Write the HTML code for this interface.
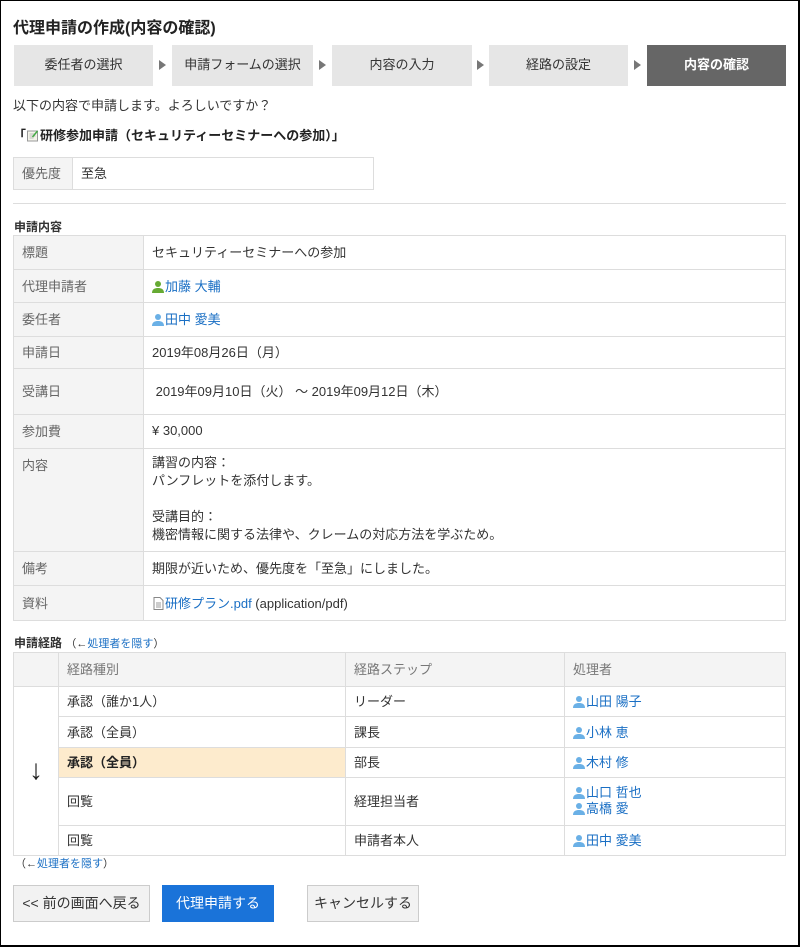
<!DOCTYPE html>
<html><head><meta charset="utf-8"><style>
*{box-sizing:border-box;margin:0;padding:0}
body{width:800px;height:947px;font-family:"Liberation Sans","Noto Sans CJK JP",sans-serif;font-size:13px;color:#333;background:#fff;position:relative;overflow:hidden}
.frame{position:absolute;left:0;top:0;width:800px;height:947px;border:1px solid #000;border-width:1px 2px 2px 1px}
.a{position:absolute}
.step{position:absolute;top:45px;height:41px;background:#e6e6e6;text-align:center;line-height:40px;font-size:13px;color:#333}
.arr{position:absolute;top:60px;width:0;height:0;border-left:7px solid #777;border-top:5px solid transparent;border-bottom:5px solid transparent}
table{border-collapse:collapse;position:absolute}
td{border:1px solid #ddd;padding:0 8px;vertical-align:middle;padding-bottom:2px}
td.l{background:#f4f4f4;color:#666}
a{color:#1a6fc4;text-decoration:none}
.u{display:inline-block;width:12px;height:13px;vertical-align:-2px;margin-right:1px}
.btn{position:absolute;top:885px;height:37px;line-height:35px;text-align:center;font-size:14px;border:1px solid #ccc;background:#f2f2f2;color:#333}
</style></head><body>
<div class="frame"></div>
<div class="a" style="left:13px;top:14px;font-size:16px;font-weight:bold;color:#222">代理申請の作成(内容の確認)</div>
<div class="step" style="left:14px;width:139px">委任者の選択</div>
<div class="arr" style="left:159px"></div>
<div class="step" style="left:172px;width:141px">申請フォームの選択</div>
<div class="arr" style="left:319px"></div>
<div class="step" style="left:332px;width:140px">内容の入力</div>
<div class="arr" style="left:477px"></div>
<div class="step" style="left:489px;width:139px">経路の設定</div>
<div class="arr" style="left:634px"></div>
<div class="step" style="left:647px;width:139px;background:#666;color:#fff;font-weight:bold">内容の確認</div>
<div class="a" style="left:13px;top:95px">以下の内容で申請します。よろしいですか？</div>
<div class="a" style="left:13px;top:125px;font-weight:bold;color:#222">「<svg class="u" viewBox="0 0 12 13" style="width:13px"><rect x="1" y="2" width="10" height="10" fill="#f4f4ea" stroke="#999"/><path d="M3 5h6M3 7h6M3 9h4" stroke="#bbb"/><path d="M6 8l5-6" stroke="#4a4" stroke-width="1.5"/></svg>研修参加申請（セキュリティーセミナーへの参加）」</div>
<table style="left:13px;top:157px;width:361px;height:33px"><tr><td class="l" style="width:59px">優先度</td><td>至急</td></tr></table>
<div class="a" style="left:13px;top:203px;width:773px;height:1px;background:#ddd"></div>
<div class="a" style="left:14px;top:218px;font-weight:bold;font-size:12px;color:#333">申請内容</div>
<table style="left:13px;top:235px;width:773px">
<tr style="height:34px"><td class="l" style="width:130px">標題</td><td>セキュリティーセミナーへの参加</td></tr>
<tr style="height:33px"><td class="l">代理申請者</td><td><a><svg class="u" viewBox="0 0 12 13"><circle cx="6" cy="4" r="3" fill="#6a3"/><path d="M0 13c0-4 3-5 6-5s6 1 6 5z" fill="#6a3"/></svg>加藤 大輔</a></td></tr>
<tr style="height:34px"><td class="l">委任者</td><td><a><svg class="u" viewBox="0 0 12 13"><circle cx="6" cy="4" r="3" fill="#6ab0e6"/><path d="M0 13c0-4 3-5 6-5s6 1 6 5z" fill="#6ab0e6"/></svg>田中 愛美</a></td></tr>
<tr style="height:32px"><td class="l">申請日</td><td>2019年08月26日（月）</td></tr>
<tr style="height:46px"><td class="l">受講日</td><td>&nbsp;2019年09月10日（火） ～ 2019年09月12日（木）</td></tr>
<tr style="height:34px"><td class="l">参加費</td><td>¥ 30,000</td></tr>
<tr style="height:103px"><td class="l" style="vertical-align:top;padding-top:6px">内容</td><td style="line-height:18px">講習の内容：<br>パンフレットを添付します。<br><br>受講目的：<br>機密情報に関する法律や、クレームの対応方法を学ぶため。</td></tr>
<tr style="height:34px"><td class="l">備考</td><td>期限が近いため、優先度を「至急」にしました。</td></tr>
<tr style="height:35px"><td class="l">資料</td><td><a><svg class="u" viewBox="0 0 12 13"><path d="M2 .5h6l3 3v9h-9z" fill="#fff" stroke="#888"/><path d="M4 6h5M4 8h5M4 10h5" stroke="#999"/></svg>研修プラン.pdf</a> (application/pdf)</td></tr>
</table>
<div class="a" style="left:14px;top:634px;font-size:12px"><b>申請経路</b> <span style="font-size:11px">（←<a>処理者を隠す</a>）</span></div>
<table style="left:13px;top:652px;width:773px">
<tr style="height:34px;background:#f4f4f4;color:#777"><td style="width:45px"></td><td style="width:287px">経路種別</td><td style="width:219px">経路ステップ</td><td>処理者</td></tr>
<tr style="height:30px"><td rowspan="5" style="font-size:28px;text-align:center;color:#222">↓</td><td>承認（誰か1人）</td><td>リーダー</td><td><a><svg class="u" viewBox="0 0 12 13"><circle cx="6" cy="4" r="3" fill="#6ab0e6"/><path d="M0 13c0-4 3-5 6-5s6 1 6 5z" fill="#6ab0e6"/></svg>山田 陽子</a></td></tr>
<tr style="height:31px"><td>承認（全員）</td><td>課長</td><td><a><svg class="u" viewBox="0 0 12 13"><circle cx="6" cy="4" r="3" fill="#6ab0e6"/><path d="M0 13c0-4 3-5 6-5s6 1 6 5z" fill="#6ab0e6"/></svg>小林 恵</a></td></tr>
<tr style="height:30px"><td style="background:#fdebcd;font-weight:bold;color:#222">承認（全員）</td><td>部長</td><td><a><svg class="u" viewBox="0 0 12 13"><circle cx="6" cy="4" r="3" fill="#6ab0e6"/><path d="M0 13c0-4 3-5 6-5s6 1 6 5z" fill="#6ab0e6"/></svg>木村 修</a></td></tr>
<tr style="height:48px"><td>回覧</td><td>経理担当者</td><td style="line-height:16px"><a><svg class="u" viewBox="0 0 12 13"><circle cx="6" cy="4" r="3" fill="#6ab0e6"/><path d="M0 13c0-4 3-5 6-5s6 1 6 5z" fill="#6ab0e6"/></svg>山口 哲也</a><br><a><svg class="u" viewBox="0 0 12 13"><circle cx="6" cy="4" r="3" fill="#6ab0e6"/><path d="M0 13c0-4 3-5 6-5s6 1 6 5z" fill="#6ab0e6"/></svg>高橋 愛</a></td></tr>
<tr style="height:30px"><td>回覧</td><td>申請者本人</td><td><a><svg class="u" viewBox="0 0 12 13"><circle cx="6" cy="4" r="3" fill="#6ab0e6"/><path d="M0 13c0-4 3-5 6-5s6 1 6 5z" fill="#6ab0e6"/></svg>田中 愛美</a></td></tr>
</table>
<div class="a" style="left:15px;top:855px;font-size:11px">（←<a>処理者を隠す</a>）</div>
<div class="btn" style="left:13px;width:137px">&lt;&lt; 前の画面へ戻る</div>
<div class="btn" style="left:162px;width:112px;background:#1a73d9;border-color:#1a73d9;color:#fff">代理申請する</div>
<div class="btn" style="left:307px;width:112px">キャンセルする</div>
</body></html>
